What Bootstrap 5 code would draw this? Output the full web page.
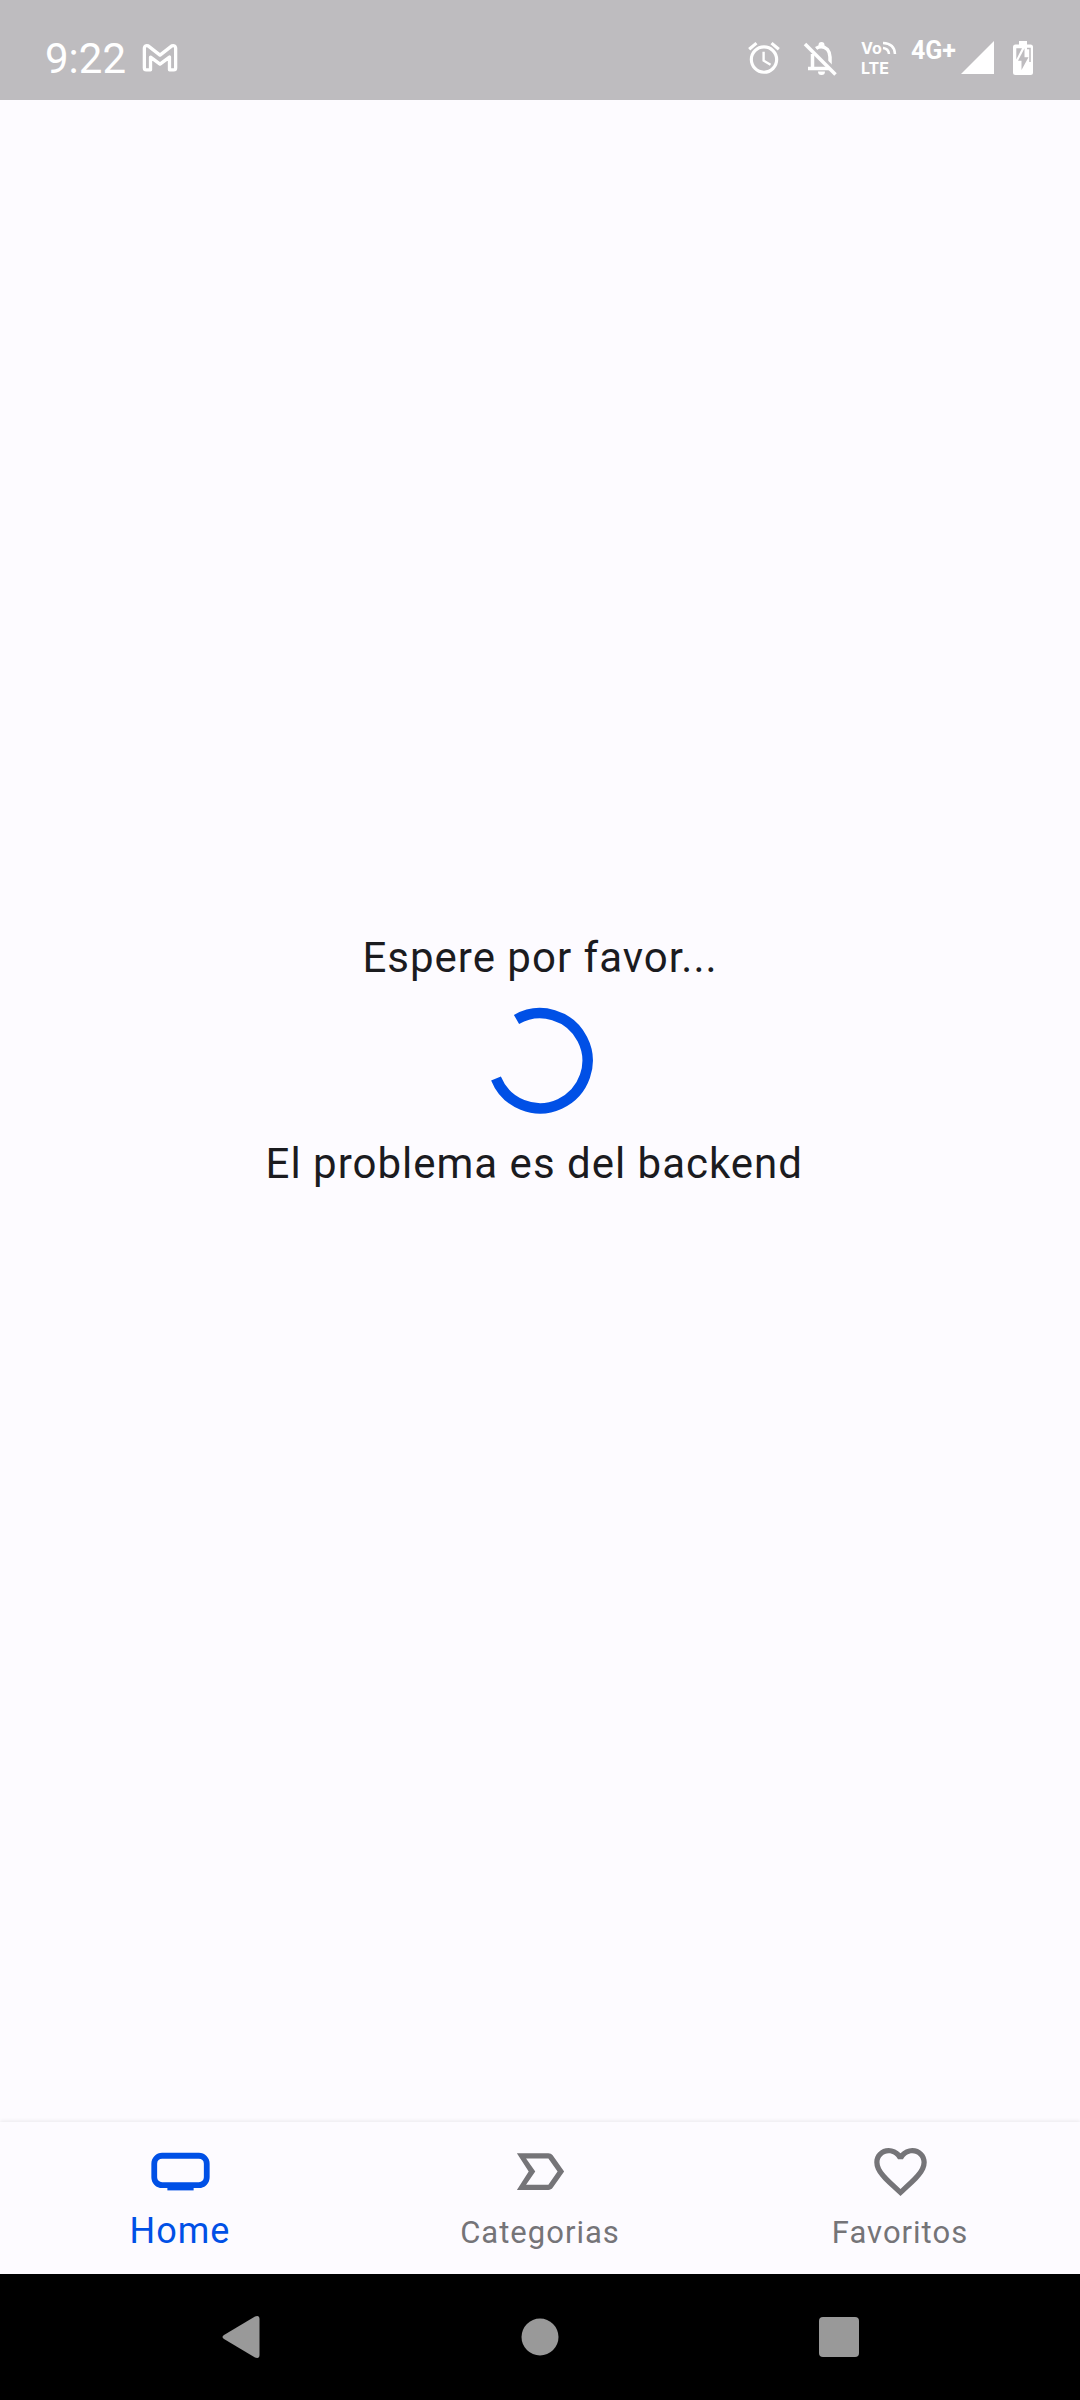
<!DOCTYPE html>
<html lang="es">
<head>
<meta charset="utf-8">
<meta name="viewport" content="width=device-width, initial-scale=1">
<title>Home</title>
<link href="https://cdn.jsdelivr.net/npm/bootstrap@5.3.0/dist/css/bootstrap.min.css" rel="stylesheet">
<style>
  body { background: #fdfbff; color: #1b1b1f; font-family: Roboto, "Noto Sans", sans-serif; }
  svg { display: block; flex: none; }

  /* translucent system bar laid over the app */
  .status-bar { background: #bebcbf; color: #fff; padding: 34px 45px 18px 45px; }
  .status-row { height: 48px; }
  .clock { font-size: 42px; line-height: 48px; padding-top: 2px; }
  .network { font-size: 25px; line-height: 30px; font-weight: 700; margin: 0 5px 14px 12px; }
  .bell { margin: 0 20px 0 16px; }
  .volte { font-family: Inter, "Noto Sans", sans-serif; font-size: 16px; line-height: 20px; font-weight: 700; width: 38px; }

  .loading-text { font-size: 42px; line-height: 60px; letter-spacing: 1px; white-space: pre; }
  .loading { color: #0050e6; margin: 18px 0; }

  .tab-bar { background: #fdfbff; box-shadow: 0 -1px 4px rgba(0, 0, 0, .08); padding: 18px 0 19px; }
  .tab { color: #757478; font-size: 31px; line-height: 44px; letter-spacing: 1px; gap: 8px; }
  .tab.active { color: #0050e6; font-size: 36px; line-height: 40px; }

  .system-nav { background: #000; padding: 0 92px; }
  .system-key { color: #999; height: 126px; }
</style>
<script src="https://cdn.jsdelivr.net/npm/bootstrap@5.3.0/dist/js/bootstrap.bundle.min.js"></script>
</head>
<body>
<div class="d-flex flex-column min-vh-100">
  <header class="status-bar fixed-top">
    <div class="status-row d-flex align-items-center justify-content-between">
      <div class="d-flex align-items-center">
        <span class="clock">9:22</span>
        <svg class="ms-3" width="36" height="30" viewBox="0 0 38 30" fill="none" stroke="#fff" stroke-width="3.500" stroke-linejoin="round" aria-hidden="true">
          <path d="M2.500 4.500V25.500Q2.500 27.500 4.500 27.500H9V14L19 21.500L29 14V27.500H33.500Q35.500 27.500 35.500 25.500V4.500Q35 1 31.500 2.200L19 12L6.500 2.200Q3 1 2.500 4.500Z"/>
        </svg>
      </div>
      <div class="d-flex align-items-center">
        <svg width="38" height="38" viewBox="0 0 24 24" fill="#fff" aria-hidden="true">
          <path d="M22 5.720l-4.600-3.860-1.290 1.530 4.600 3.860L22 5.720zM7.880 3.390L6.600 1.860 2 5.710l1.290 1.530 4.590-3.850zM12.500 8H11v6l4.750 2.850.75-1.230-4-2.370V8zM12 4c-4.970 0-9 4.030-9 9s4.020 9 9 9a9 9 0 0 0 0-18zm0 16c-3.870 0-7-3.130-7-7s3.130-7 7-7 7 3.130 7 7-3.130 7-7 7z"/>
        </svg>
        <svg class="bell" width="42" height="38" viewBox="0 0 42 38" fill="none" stroke="#fff" aria-hidden="true">
          <path d="M13.500 15V29M9 29.500H30M17 9.500Q23 5.500 28.500 10.500Q31 13.500 31 18V26" stroke-width="3.500"/>
          <path d="M19.500 7V6a3 3 0 0 1 6 0V7ZM19 32.500h7a3.500 3.500 0 0 1-7 0Z" fill="#fff" stroke="none"/>
          <path d="M10 5L38 32.500" stroke="#bebcbf" stroke-width="3"/>
          <path d="M6 5L36.500 35.500" stroke-width="3.500"/>
        </svg>
        <div class="volte">
          <div class="d-flex">
            <span>Vo</span>
            <svg width="15" height="20" viewBox="0 0 15 20" fill="none" stroke="#fff" stroke-width="2.500" aria-hidden="true">
              <path d="M1 10Q6.500 10.500 7 16M1 5Q12.500 5.500 13 16"/>
            </svg>
          </div>
          <div>LTE</div>
        </div>
        <span class="network">4G+</span>
        <svg width="34" height="34" viewBox="0 0 34 34" fill="#fff" aria-hidden="true"><path d="M33 0V33H0Z"/></svg>
        <svg class="ms-3" width="24" height="36" viewBox="0 0 24 36" aria-hidden="true">
          <path fill="#fff" d="M8 1h8v3.500h3.500Q22 4.500 22 7v25.500Q22 35 19.500 35h-15Q2 35 2 32.500V7Q2 4.500 4.500 4.500H8Z"/>
          <path fill="#bebcbf" d="M5.300 8.300H11L5.300 19.500ZM13.500 8.300L7 20.700H10.500V30L17.500 17.300H13.500Z"/>
          <path fill="none" stroke="#bebcbf" stroke-width="1.500" d="M16 8.500h3V22"/>
        </svg>
      </div>
    </div>
  </header>

  <main class="flex-grow-1 d-flex flex-column align-items-center justify-content-center">
    <p class="loading-text mb-0">Espere por favor...</p>
    <svg class="loading" width="110" height="110" viewBox="0 0 110 110" fill="none" stroke="currentColor" stroke-width="10.500" role="status" aria-label="Cargando">
      <path d="M31.500 13.500A47.500 47.500 0 1 1 11 72.500"/>
    </svg>
    <p class="loading-text mb-0">El problema es del backend&nbsp;</p>
  </main>

  <nav class="tab-bar row g-0" aria-label="Principal">
    <a class="tab active col d-flex flex-column align-items-center text-decoration-none" href="#home" aria-current="page">
      <svg width="63" height="63" viewBox="0 0 24 24" aria-hidden="true">
        <rect x="2" y="6" width="20" height="11.200" rx="3" fill="none" stroke="currentColor" stroke-width="2.200"/>
        <path d="M7 17h10v2.200H7z" fill="currentColor"/>
      </svg>
      <span>Home</span>
    </a>
    <a class="tab col d-flex flex-column align-items-center text-decoration-none" href="#categorias">
      <svg width="63" height="63" viewBox="0 0 24 24" fill="currentColor" aria-hidden="true">
        <path d="M15 19H3l4.500-7L3 5h12c.65 0 1.260.31 1.630.84L21 12l-4.370 6.160c-.37.52-.98.84-1.630.84zm-8.500-2H15l3.500-5L15 7H6.500l3.500 5-3.500 5z"/>
      </svg>
      <span>Categorias</span>
    </a>
    <a class="tab col d-flex flex-column align-items-center text-decoration-none" href="#favoritos">
      <svg width="63" height="63" viewBox="0 0 24 24" fill="currentColor" aria-hidden="true">
        <path d="M16.500 3c-1.740 0-3.410.81-4.500 2.090C10.910 3.810 9.240 3 7.500 3 4.420 3 2 5.420 2 8.500c0 3.780 3.400 6.860 8.550 11.540L12 21.350l1.450-1.320C18.600 15.360 22 12.280 22 8.500 22 5.420 19.580 3 16.500 3zm-4.400 15.550l-.1.100-.1-.100C7.140 14.240 4 11.390 4 8.500 4 6.500 5.500 5 7.500 5c1.540 0 3.040.99 3.570 2.360h1.870C13.460 5.990 14.960 5 16.500 5c2 0 3.500 1.500 3.500 3.500 0 2.890-3.140 5.740-7.900 10.050z"/>
      </svg>
      <span>Favoritos</span>
    </a>
  </nav>

  <div class="system-nav row g-0">
    <button class="system-key btn border-0 rounded-0 p-0 col d-flex align-items-center justify-content-center" type="button" aria-label="Atrás">
      <svg width="38" height="44" viewBox="0 0 38 44" fill="currentColor" aria-hidden="true"><path d="M33 1.500Q37.500 0 37.500 4V40Q37.500 44 33 42.500L2 24Q-1 22 2 20Z"/></svg>
    </button>
    <button class="system-key btn border-0 rounded-0 p-0 col d-flex align-items-center justify-content-center" type="button" aria-label="Inicio">
      <svg width="38" height="38" viewBox="0 0 38 38" fill="currentColor" aria-hidden="true"><circle cx="19" cy="19" r="18.500"/></svg>
    </button>
    <button class="system-key btn border-0 rounded-0 p-0 col d-flex align-items-center justify-content-center" type="button" aria-label="Recientes">
      <svg width="40" height="40" viewBox="0 0 40 40" fill="currentColor" aria-hidden="true"><rect width="40" height="40" rx="4"/></svg>
    </button>
  </div>
</div>
</body>
</html>
